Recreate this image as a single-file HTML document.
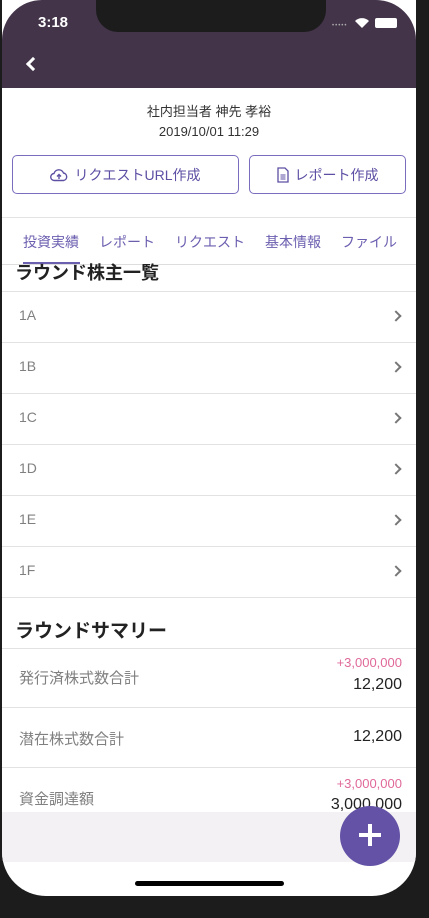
<!DOCTYPE html>
<html><head><meta charset="utf-8"><style>
*{margin:0;padding:0;box-sizing:border-box}
body{width:429px;height:918px;background:#1c1c1c;position:relative;overflow:hidden;font-family:"Liberation Sans","Noto Sans CJK JP",sans-serif}
.scr{position:absolute;left:2px;top:0;width:414px;height:896px;background:#fff;border-radius:0 0 44px 44px;overflow:hidden}
.hdr{position:absolute;left:0;top:0;width:414px;height:88px;background:#43344a;border-radius:40px 40px 0 0}
.notch{position:absolute;left:94px;top:0;width:230px;height:32px;background:#1c1c1c;border-radius:0 0 22px 22px}
.abs{position:absolute}
.row{position:absolute;left:0;width:414px;border-top:1px solid #e2e2e2;color:#808080;font-size:14px}
.chev{position:absolute;right:16px;width:8px;height:8px;border-right:2px solid #777;border-top:2px solid #777;transform:rotate(45deg)}
.btn{position:absolute;top:155px;height:39px;border:1.5px solid #7b6cbd;border-radius:5px;color:#5d4fa3;font-size:14px;display:flex;align-items:center;justify-content:center;gap:6px}
.tab{position:absolute;top:232px;font-size:14px;color:#6b5fb0}
</style></head><body>
<div class="scr">
<div class="hdr"></div>
<div class="notch"></div>
<div class="abs" style="left:36px;top:14px;color:#fff;font-size:15px;font-weight:bold">3:18</div>
<div class="abs" style="left:330px;top:23px;color:#aaa;font-size:6px;letter-spacing:1px">•••••</div>
<svg class="abs" style="left:352px;top:17px" width="16" height="12" viewBox="0 0 16 12"><path d="M8 11 L1 4 A10 10 0 0 1 15 4 Z" fill="#fff"/></svg>
<div class="abs" style="left:373px;top:18px;width:22px;height:10px;background:#fff;border-radius:2px"></div>
<div class="abs" style="left:26px;top:59px;width:10px;height:10px;border-left:3px solid #fff;border-bottom:3px solid #fff;transform:rotate(45deg)"></div>
<div class="abs" style="left:0;top:102px;width:414px;text-align:center;font-size:13px;color:#333;line-height:20px">社内担当者 神先 孝裕<br>2019/10/01 11:29</div>
<div class="btn" style="left:10px;width:227px"><svg width="18" height="14" viewBox="0 0 18 14"><path d="M4.5 12.5 A3.5 3.5 0 0 1 4 5.5 A5 5 0 0 1 13.5 5 A3.8 3.8 0 0 1 13.5 12.5 Z" fill="none" stroke="#5d4fa3" stroke-width="1.4"/><path d="M9 11 V6.5 M7 8.5 L9 6.5 L11 8.5" fill="none" stroke="#5d4fa3" stroke-width="1.4"/></svg>リクエストURL作成</div>
<div class="btn" style="left:247px;width:157px"><svg width="12" height="16" viewBox="0 0 12 16"><path d="M1 1 H8 L11 4 V15 H1 Z" fill="none" stroke="#5d4fa3" stroke-width="1.3"/><path d="M3.5 8 H8.5 M3.5 10 H8.5 M3.5 12 H8.5" stroke="#5d4fa3"/></svg>レポート作成</div>
<div class="abs" style="left:0;top:217px;width:414px;border-top:1px solid #e4e4e4"></div>
<div class="tab" style="left:21px">投資実績</div>
<div class="tab" style="left:97px">レポート</div>
<div class="tab" style="left:173px">リクエスト</div>
<div class="tab" style="left:263px">基本情報</div>
<div class="tab" style="left:339px">ファイル</div>
<div class="abs" style="left:21px;top:262px;width:57px;height:2px;background:#6b5fb0"></div>
<div class="abs" style="left:0;top:264px;width:414px;border-top:1px solid #ddd"></div>
<div class="abs" style="left:13px;top:262px;font-size:18px;font-weight:bold;color:#222;height:28px;overflow:hidden;line-height:22px">ラウンド株主一覧</div>
<div class="row" style="top:291px;height:51px"><span class="abs" style="left:17px;top:15px">1A</span><i class="chev" style="top:20px"></i></div>
<div class="row" style="top:342px;height:51px"><span class="abs" style="left:17px;top:15px">1B</span><i class="chev" style="top:20px"></i></div>
<div class="row" style="top:393px;height:51px"><span class="abs" style="left:17px;top:15px">1C</span><i class="chev" style="top:20px"></i></div>
<div class="row" style="top:444px;height:51px"><span class="abs" style="left:17px;top:15px">1D</span><i class="chev" style="top:20px"></i></div>
<div class="row" style="top:495px;height:51px"><span class="abs" style="left:17px;top:15px">1E</span><i class="chev" style="top:20px"></i></div>
<div class="row" style="top:546px;height:51px"><span class="abs" style="left:17px;top:15px">1F</span><i class="chev" style="top:20px"></i></div>
<div class="row" style="top:597px;height:51px"></div>
<div class="abs" style="left:13px;top:616px;font-size:19px;font-weight:bold;color:#222">ラウンドサマリー</div>
<div class="row" style="top:648px;height:59px;font-size:15px"><span class="abs" style="left:17px;top:18px">発行済株式数合計</span><span class="abs" style="right:14px;top:6px;color:#e0699a;font-size:13px">+3,000,000</span><span class="abs" style="right:14px;top:27px;color:#222;font-size:16px">12,200</span></div>
<div class="row" style="top:707px;height:60px;font-size:15px"><span class="abs" style="left:17px;top:20px">潜在株式数合計</span><span class="abs" style="right:14px;top:20px;color:#222;font-size:16px">12,200</span></div>
<div class="row" style="top:767px;height:60px;font-size:15px"><span class="abs" style="left:17px;top:20px">資金調達額</span><span class="abs" style="right:14px;top:8px;color:#e0699a;font-size:13px">+3,000,000</span><span class="abs" style="right:14px;top:28px;color:#222;font-size:16px">3,000,000</span></div>
<div class="abs" style="left:0;top:812px;width:414px;height:50px;background:#f3f1f4"></div>
<div class="abs" style="left:338px;top:806px;width:60px;height:60px;border-radius:50%;background:#6352a6"></div>
<div class="abs" style="left:357px;top:833px;width:22px;height:4px;background:#fff"></div>
<div class="abs" style="left:366px;top:824px;width:4px;height:22px;background:#fff"></div>
<div class="abs" style="left:133px;top:881px;width:149px;height:5px;border-radius:3px;background:#000"></div>
</div>
</body></html>
